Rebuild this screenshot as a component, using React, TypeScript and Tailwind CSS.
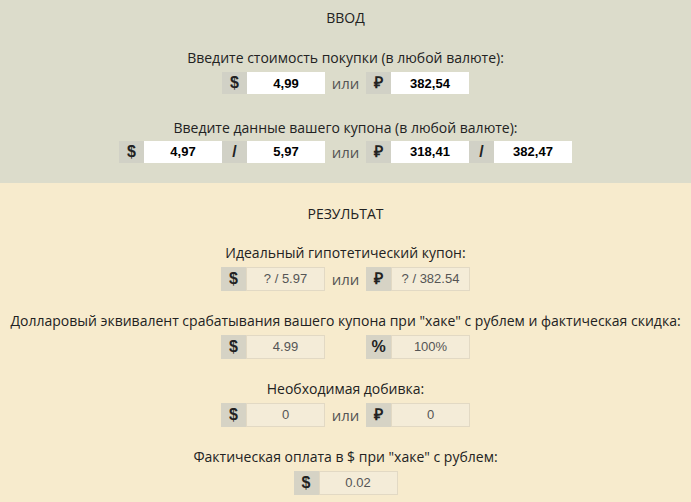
import React from 'react';

const Addon: React.FC<{ children: React.ReactNode; result?: boolean }> = ({ children, result }) => (
  <div
    className={
      'flex items-center justify-center w-[25px] text-[16px] font-bold text-[#222] font-["Liberation_Sans",Arial,sans-serif] ' +
      (result ? 'h-[24px] bg-[#d6d3c5]' : 'h-[22px] bg-[#d1d1c6]')
    }
  >
    {children}
  </div>
);

const Field: React.FC<{ value: string }> = ({ value }) => (
  <div className="flex items-center justify-center w-[78px] h-[22px] bg-white text-[13px] font-bold text-black font-['Liberation_Sans',Arial,sans-serif]">
    {value}
  </div>
);

const ResultField: React.FC<{ value: string }> = ({ value }) => (
  <div className="flex items-center justify-center w-[79px] h-[24px] bg-[#f4ecd8] border border-[#e2d9c4] text-[13px] text-[#555] font-['Liberation_Sans',Arial,sans-serif]">
    {value}
  </div>
);

const Or: React.FC<{ hidden?: boolean }> = ({ hidden }) => (
  <div className={'w-[41px] text-center text-[15px] text-[#555] ' + (hidden ? 'invisible' : '')}>или</div>
);

const Label: React.FC<{ children: React.ReactNode; className?: string }> = ({ children, className }) => (
  <div className={'text-center text-[14px] leading-[20px] text-[#222] ' + (className ?? '')}>{children}</div>
);

const RUB = '₽';

export default function App() {
  return (
    <div className="w-[691px] min-h-[502px] bg-[#f7ebcd] font-['Open_Sans','Noto_Sans',sans-serif]">
      <section className="bg-[#dcdccb] pt-[8px] pb-[20px]">
        <Label>ВВОД</Label>

        <Label className="mt-[20px]">Введите стоимость покупки (в любой валюте):</Label>
        <div className="mt-[4px] flex items-center justify-center">
          <Addon>$</Addon>
          <Field value="4,99" />
          <Or />
          <Addon>{RUB}</Addon>
          <Field value="382,54" />
        </div>

        <Label className="mt-[23px]">Введите данные вашего купона (в любой валюте):</Label>
        <div className="mt-[3px] flex items-center justify-center">
          <Addon>$</Addon>
          <Field value="4,97" />
          <Addon>/</Addon>
          <Field value="5,97" />
          <Or />
          <Addon>{RUB}</Addon>
          <Field value="318,41" />
          <Addon>/</Addon>
          <Field value="382,47" />
        </div>
      </section>

      <section className="pt-[21px] pb-[8px]">
        <Label>РЕЗУЛЬТАТ</Label>

        <Label className="mt-[19px]">Идеальный гипотетический купон:</Label>
        <div className="mt-[4px] flex items-center justify-center">
          <Addon result>$</Addon>
          <ResultField value="? / 5.97" />
          <Or />
          <Addon result>{RUB}</Addon>
          <ResultField value="? / 382.54" />
        </div>

        <Label className="mt-[20px]">
          Долларовый эквивалент срабатывания вашего купона при "хаке" с рублем и фактическая скидка:
        </Label>
        <div className="mt-[4px] flex items-center justify-center">
          <Addon result>$</Addon>
          <ResultField value="4.99" />
          <Or hidden />
          <Addon result>%</Addon>
          <ResultField value="100%" />
        </div>

        <Label className="mt-[20px]">Необходимая добивка:</Label>
        <div className="mt-[4px] flex items-center justify-center">
          <Addon result>$</Addon>
          <ResultField value="0" />
          <Or />
          <Addon result>{RUB}</Addon>
          <ResultField value="0" />
        </div>

        <Label className="mt-[20px]">Фактическая оплата в $ при "хаке" с рублем:</Label>
        <div className="mt-[4px] flex items-center justify-center">
          <Addon result>$</Addon>
          <ResultField value="0.02" />
        </div>
      </section>
    </div>
  );
}
